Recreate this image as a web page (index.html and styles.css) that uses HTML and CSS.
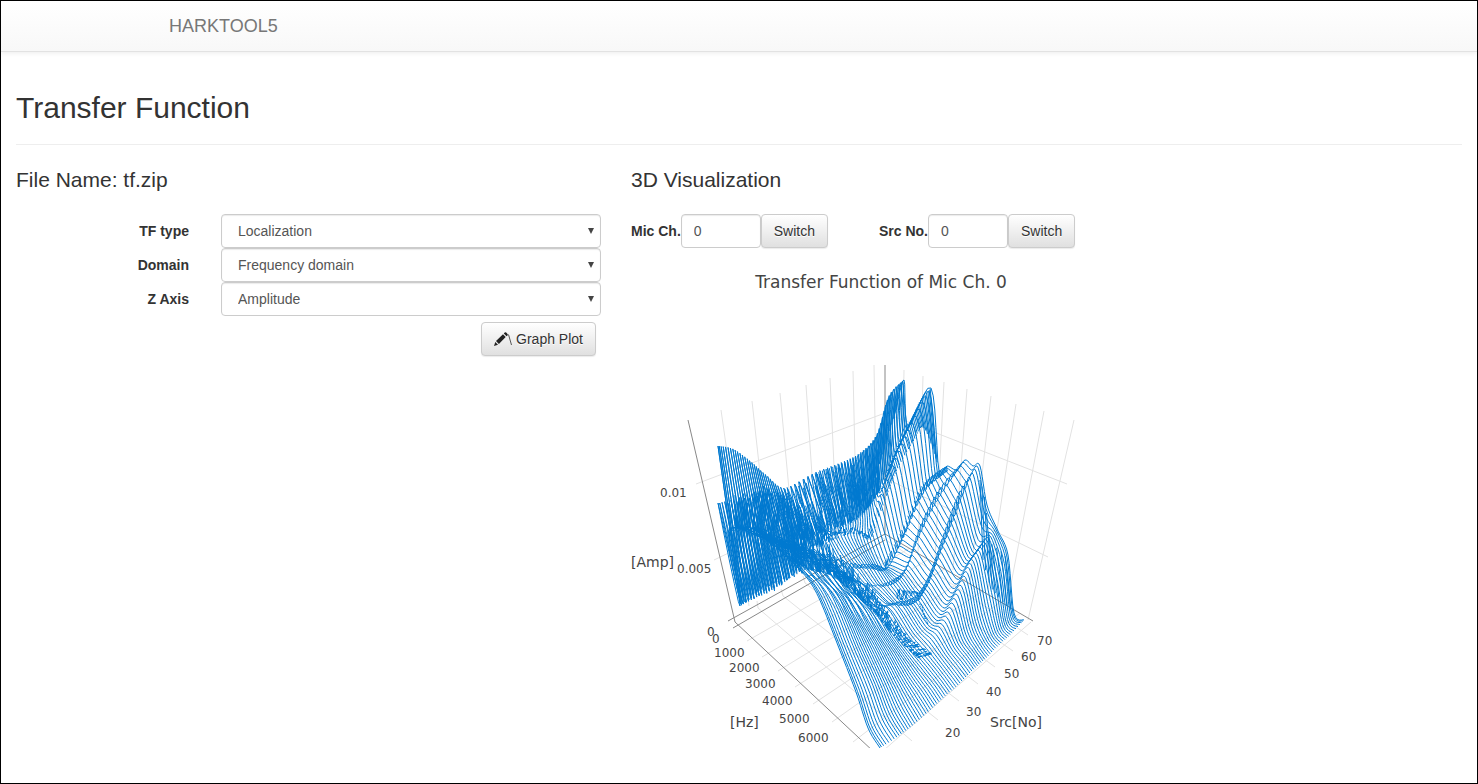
FILE: index.html
```
<!DOCTYPE html>
<html lang="en">
<head>
  <meta charset="UTF-8">
  <meta name="viewport" content="width=device-width, initial-scale=1.0">
  <title>HARKTOOL5</title>
  <link rel="stylesheet" href="styles.css">
</head>
<body>

  <nav class="navbar">
    <div class="container">
      <a class="navbar-brand" href="#">HARKTOOL5</a>
    </div>
  </nav>

  <main class="content">
    <h1>Transfer Function</h1>
    <hr>

    <div class="row">
      <section class="col-form">
        <h2>File Name: tf.zip</h2>
        <form>
          <div class="form-group">
            <label for="tfType">TF type</label>
            <div class="select-box">
              <select id="tfType"><option>Localization</option><option>Separation</option></select>
            </div>
          </div>
          <div class="form-group">
            <label for="domain">Domain</label>
            <div class="select-box">
              <select id="domain"><option>Frequency domain</option><option>Time domain</option></select>
            </div>
          </div>
          <div class="form-group">
            <label for="zAxis">Z Axis</label>
            <div class="select-box">
              <select id="zAxis"><option>Amplitude</option><option>Phase</option></select>
            </div>
          </div>
          <div class="form-actions">
            <button type="button" class="btn">
              <svg class="icon" width="19" height="14" viewBox="0 0 19 14" aria-hidden="true">
                <path d="M0 14l1.300-4 2.700 2.700zM2 9l7-6.800 2.700 2.700L4.900 11.900zM9.800 1.500l.9-.9q.8-.7 1.500 0l1.300 1.300q.7.8 0 1.500l-.9.9z" fill="#222"/>
                <path d="M14.500 2.500l3 10.500" stroke="#555" fill="none"/>
              </svg>Graph Plot
            </button>
          </div>
        </form>
      </section>

      <section class="col-plot">
        <h2>3D Visualization</h2>
        <form class="switches">
          <div class="switch">
            <label for="micCh">Mic Ch.</label>
            <input type="text" id="micCh" value="0">
            <button type="button" class="btn">Switch</button>
          </div>
          <div class="switch">
            <label for="srcNo">Src No.</label>
            <input type="text" id="srcNo" value="0">
            <button type="button" class="btn">Switch</button>
          </div>
        </form>

        <svg class="plot" width="500" height="500" viewBox="631 248 500 500">
          <text class="plot-title" x="881" y="288" text-anchor="middle">Transfer Function of Mic Ch. 0</text>
          <g class="grid">
            <path d="M721 410L749 606M752 401L773 590M780 393L797 575M806 385L818 565M830 378L838 555M853 371L857 545M874 365L877 535M904 370L901 540M923 376L918 555M944 382L935 560M967 389L953 570M991 396L970 580M1016 404L988 590M1044 411L1007 605M1074 420L1028 620"/>
            <path d="M696 484L885 413L1067 484M714 560L885 478L1048 557"/>
            <path d="M747 641L910 548M762 657L929 559M778 671L946 568M795 687L965 579M813 704L984 590M832 722L1002 601M853 742L1020 613"/>
            <path d="M757 601L758 608L912 741M781 589L783 596L938 720M803 576L805 583L959 701M824 566L978 684M843 556L995 667M862 546L1013 651M880 536L1028 635"/>
            <path d="M884 750L1031 622"/>
          </g>
          <g class="axis">
            <path d="M688 420L735 622L874 752M885 365V535M728 621L885 534L1033 621M733 628L885 540"/>
          </g>
          <g id="lines"></g>
          <g class="ticks">
            <text x="660" y="497">0.01</text>
            <text x="677" y="573">0.005</text>
            <text x="707" y="636">0</text>
            <text x="712" y="643">0</text>
            <text x="714" y="657">1000</text>
            <text x="729" y="672">2000</text>
            <text x="745" y="688">3000</text>
            <text x="762" y="705">4000</text>
            <text x="779" y="723">5000</text>
            <text x="798" y="742">6000</text>
            <text x="945" y="737">20</text>
            <text x="966" y="716">30</text>
            <text x="986" y="696">40</text>
            <text x="1004" y="678">50</text>
            <text x="1021" y="661">60</text>
            <text x="1037" y="645">70</text>
          </g>
          <g class="axis-names">
            <text x="631" y="567">[Amp]</text>
            <text x="730" y="727">[Hz]</text>
            <text x="990" y="727">Src[No]</text>
          </g>
        </svg>
      </section>
    </div>
  </main>

  <script src="plot.js"></script>
</body>
</html>
```
FILE: styles.css
```
* {
  box-sizing: border-box;
}

body {
  margin: 0;
  min-height: 100vh;
  border: 1px solid #000;
  background-color: #fff;
  color: #333;
  font-family: "Liberation Sans", Arial, sans-serif;
  font-size: 14px;
  line-height: 20px;
}

.navbar {
  height: 51px;
  border-bottom: 1px solid #e2e2e2;
  background-image: linear-gradient(#fff, #f8f8f8);
  box-shadow: 0 1px 5px rgba(0, 0, 0, 0.08);
}

.container {
  max-width: 1170px;
  margin: 0 auto;
  padding: 15px;
}

.navbar-brand {
  color: #777;
  font-size: 18px;
  text-decoration: none;
}

.content {
  padding: 0 15px;
}

h1,
h2 {
  font-weight: normal;
}

h1 {
  margin: 39px 0 19px;
  font-size: 30px;
  line-height: 34px;
}

h2 {
  margin: 0 0 22px;
  font-size: 21px;
  line-height: 24px;
}

hr {
  margin: 0 0 23px;
  border: 0;
  border-top: 1px solid #eee;
}

.row {
  display: grid;
  grid-template-columns: 5fr 7fr;
  margin: 0 -15px;
}

.col-form,
.col-plot {
  padding: 0 15px;
}

.form-group {
  display: grid;
  grid-template-columns: 1fr 2fr;
  align-items: center;
  margin: 0 -15px;
}

.form-group label {
  padding-right: 17px;
  text-align: right;
}

label {
  font-weight: bold;
}

.select-box {
  position: relative;
  margin: 0 15px;
}

.select-box::after {
  content: "";
  position: absolute;
  top: 14px;
  right: 7px;
  border: solid transparent;
  border-width: 6px 3px 0;
  border-top-color: #444;
  pointer-events: none;
}

select,
input {
  display: block;
  height: 34px;
  border: 1px solid #ccc;
  border-radius: 4px;
  background-color: #fff;
  box-shadow: inset 0 1px 1px rgba(0, 0, 0, 0.08);
  color: #555;
  font: inherit;
}

select {
  width: 100%;
  padding: 0 16px;
  appearance: none;
}

input {
  width: 80px;
  padding: 0 12px;
}

.btn {
  height: 34px;
  padding: 0 12px;
  border: 1px solid #ccc;
  border-radius: 4px;
  background-image: linear-gradient(#fff, #e0e0e0);
  box-shadow: inset 0 1px 0 rgba(255, 255, 255, 0.15), 0 1px 1px rgba(0, 0, 0, 0.08);
  color: #333;
  font: inherit;
  text-shadow: 0 1px 0 #fff;
  white-space: nowrap;
}

.icon {
  margin-right: 3px;
  vertical-align: -2px;
}

.form-actions {
  padding: 6px 5px 0;
  text-align: right;
}

.switches {
  display: flex;
}

.switch {
  display: flex;
  align-items: center;
  width: 248px;
}

.plot {
  display: block;
}

.plot text {
  fill: #444;
  font-family: "DejaVu Sans", Verdana, sans-serif;
}

.plot .plot-title {
  font-size: 17px;
}

.ticks {
  font-size: 12px;
}

.axis-names {
  font-size: 14px;
}

.grid {
  fill: none;
  stroke: #e2e2e2;
}

.axis {
  fill: none;
  stroke: #888;
}

#lines {
  fill: none;
  stroke: #0079d0;
}
```
FILE: plot.js
```
// Each track follows one feature (peak or valley) across the sources,
// from source 0 to source 71 in ten equal steps.
var tracks = [
  [[740,600],[757,592],[775,583],[792,571],[808,545],[830,524],[847,514],[863,502],[873,482],[884,450],[896,410]],
  [[718,446],[733,449],[750,461],[766,475],[785,488],[814,473],[840,463],[860,453],[877,434],[889,396],[904,380]],
  [[740,606],[757,597],[775,588],[793,575],[808,555],[834,533],[852,522],[868,508],[880,488],[892,457],[908,426]],
  [[718,503],[737,500],[755,494],[775,492],[798,505],[825,530],[850,537],[871,533],[888,483],[909,431],[931,388]],
  [[741,604],[757,596],[775,588],[792,575],[812,568],[845,567],[868,567],[884,567],[901,537],[921,493],[939,471]],
  [[728,532],[745,530],[768,535],[790,545],[815,550],[850,563],[875,565],[890,566],[906,529],[926,483],[947,466]],
  [[758,536],[775,542],[792,550],[810,560],[833,572],[865,582],[889,585],[904,572],[918,538],[936,502],[957,470]],
  [[775,546],[792,545],[810,552],[830,562],[850,578],[872,587],[893,581],[908,567],[922,525],[941,488],[965,460]],
  [[800,570],[815,574],[832,580],[850,590],[868,602],[890,604],[911,604],[925,588],[940,551],[956,511],[973,466]],
  [[812,585],[830,590],[848,600],[866,609],[882,612],[899,604],[917,596],[931,574],[945,534],[961,492],[980,466]],
  [[822,605],[842,612],[860,622],[879,631],[898,637],[917,631],[934,620],[948,598],[962,567],[976,545],[987,505]],
  [[837,643],[856,646],[875,650],[893,653],[911,654],[928,643],[944,623],[959,592],[973,562],[987,541],[998,531]],
  [[856,692],[873,685],[890,681],[907,677],[924,670],[940,659],[955,646],[969,630],[983,610],[997,580],[1008,555]],
  [[868,728],[885,717],[902,706],[919,695],[935,684],[950,672],[965,659],[978,647],[991,635],[1004,623],[1014,613]],
  [[880,748],[897,737],[913,725],[929,711],[944,697],[959,684],[973,670],[986,658],[999,645],[1012,633],[1024,620]]
];

// Areas where many lines cross: upper edge, lower edge, number of strokes.
var bands = [
  [[[735,495],[760,486],[782,489],[803,510],[825,540],[850,562],[872,587],[890,612],[910,637],[933,654]],
   [[735,526],[755,533],[778,550],[805,568],[830,575],[850,590],[868,606],[885,626],[900,642],[918,658]], 460],
  [[[785,489],[814,474],[840,464],[860,454],[877,438]],
   [[800,540],[828,530],[850,522],[866,510],[880,490]], 180],
  [[[800,520],[820,528],[850,526],[869,535]],
   [[800,545],[820,545],[850,534],[869,540]], 90],
  [[[897,590],[903,586],[911,591],[917,591],[923,608],[928,621]],
   [[897,598],[903,600],[911,596],[917,595],[922,613],[928,625]], 60]
];

// Steep walls, drawn with full strokes.
var walls = [
  [[[785,489],[814,474],[840,464],[860,454],[877,435],[889,397],[904,381]],
   [[796,550],[824,534],[850,524],[867,510],[882,485],[893,458],[908,427]], 46],
  [[[868,532],[884,484],[893,457],[909,427],[919,403],[931,388]],
   [[871,540],[887,495],[897,470],[913,442],[924,428],[938,465]], 46],
  [[[885,562],[900,534],[920,489],[935,474],[947,466]],
   [[886,568],[902,541],[922,494],[937,479],[948,471]], 40],
  [[[980,480],[985,500],[990,540],[1000,550],[1008,560]],
   [[983,560],[990,585],[997,595],[1006,605],[1013,612]], 9]
];

function spline(a, b, c, d, u) {
  return b + 0.5 * u * (c - a + u * (2 * a - 5 * b + 4 * c - d + u * (3 * (b - c) + d - a)));
}

function pointAt(points, t) {
  var i = Math.min(Math.floor(t), points.length - 2);
  var a = points[Math.max(i - 1, 0)];
  var d = points[Math.min(i + 2, points.length - 1)];
  return [0, 1].map(function (k) {
    return spline(a[k], points[i][k], points[i + 1][k], d[k], t - i);
  });
}

function draw(path) {
  var line = document.createElementNS('http://www.w3.org/2000/svg', 'path');
  line.setAttribute('d', path);
  document.getElementById('lines').appendChild(line);
}

var sources = 72;
var path = '';
for (var s = 0; s < sources; s++) {
  var t = s / (sources - 1) * 10;
  var keys = tracks.map(function (track, n) {
    var p = pointAt(track, t);
    // low sources are noisy in the middle of the band
    if (n > 2 && n < 10) {
      p[1] += Math.sin(s * 2.3 + n * 1.7) * 4 * Math.max(0, 1 - t / 6) * Math.min(1, t / 2);
    }
    return p;
  });
  for (var f = 0; f <= (keys.length - 1) * 6; f++) {
    var q = pointAt(keys, f / 6);
    path += (f ? 'L' : 'M') + q[0].toFixed(1) + ' ' + q[1].toFixed(1);
  }
}
draw(path);

var seed = 7;
function random() {
  seed = (seed * 16807) % 2147483647;
  return seed / 2147483647;
}

function hatch(band, full) {
  var d = '';
  for (var i = 0; i < band[2]; i++) {
    var t = i / band[2] * (band[0].length - 1);
    var top = pointAt(band[0], t);
    var bottom = pointAt(band[1], t);
    var from = full ? 0 : random();
    var to = full ? 1 : Math.min(1, from + 0.2 + random() * 0.4);
    d += 'M' + (top[0] + (bottom[0] - top[0]) * from).toFixed(1) + ' ' + (top[1] + (bottom[1] - top[1]) * from).toFixed(1);
    d += 'L' + (top[0] + (bottom[0] - top[0]) * to).toFixed(1) + ' ' + (top[1] + (bottom[1] - top[1]) * to).toFixed(1);
  }
  draw(d);
}

bands.forEach(function (band) {
  hatch(band, false);
});
walls.forEach(function (wall) {
  hatch(wall, true);
});
```
